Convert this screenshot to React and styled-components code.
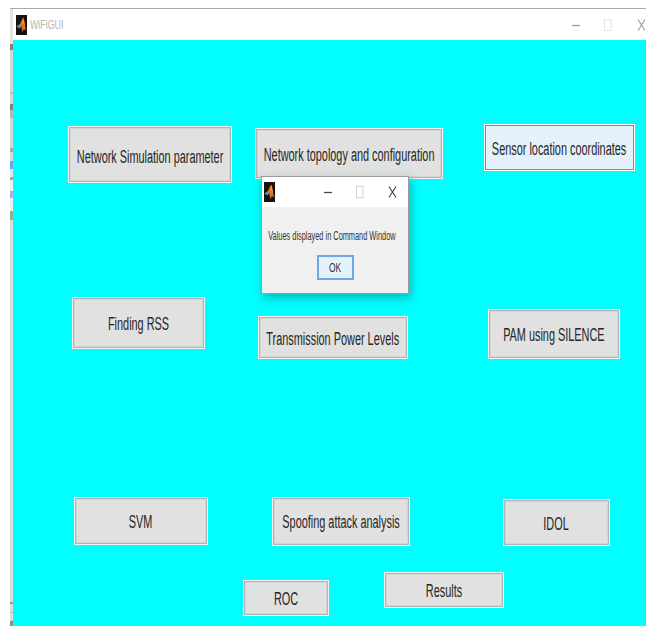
import React from "react";
import styled, { createGlobalStyle, css } from "styled-components";

const Global = createGlobalStyle`
  html, body { margin: 0; padding: 0; background: #fff; }
  body { font-family: "Liberation Sans", Arial, sans-serif; }
`;

const Page = styled.div`
  width: 646px;
  height: 626px;
  overflow: hidden;
  display: flex;
  padding-left: 10px;
  box-sizing: border-box;
  background: #fff;
`;

/* Sliver of the window behind the figure, showing along its left edge */
const BehindStrip = styled.div`
  width: 3px;
  flex: none;
  background: linear-gradient(
    to bottom,
    #fff 0 8px, #a9a9a9 8px 9px, #e2e2e2 9px 44px, #8a7f70 44px 50px, #d6d6d6 50px 92px,
    #bbb 92px 94px, #d6d6d6 94px 104px, #8b8076 104px 110px, #b5b5b5 110px 118px,
    #d8d8d8 118px 148px, #a8a8a8 148px 152px, #d8d8d8 152px 161px, #6aa6ea 161px 169px,
    #e4e4e4 169px 177px, #a4a4a4 177px 180px, #eee 180px 191px, #b5a8f2 191px 198px,
    #eee 198px 211px, #8fb590 211px 220px, #dcdcdc 220px 602px, #9a9a9a 602px 604px,
    #dcdcdc 604px 612px, #bbb 612px 613px, #dcdcdc 613px 621px, #8d8d8d 621px 626px
  );
`;

const FigureWindow = styled.div`
  flex: 1;
  min-width: 0;
  display: flex;
  flex-direction: column;
  padding-top: 8px;
`;

const TitleBar = styled.div`
  height: 31px;
  flex: none;
  display: flex;
  align-items: center;
  background: #fff;
  border-top: 1px solid #a9a9a9;
  padding: 0 0 0 3px;
  box-sizing: content-box;
`;

const AppIcon = styled.svg`
  flex: none;
  display: block;
`;

const TitleText = styled.span`
  margin-left: 3px;
  font-size: 13px;
  color: #b4b4b4;
  display: inline-block;
  transform: scaleX(0.68);
  transform-origin: left center;
`;

const Controls = styled.div`
  margin-left: auto;
  display: flex;
  align-items: center;
`;

const Glyph = styled.svg`
  display: block;
  flex: none;
  margin-left: ${(p) => p.$ml}px;
`;

const Canvas = styled.div`
  position: relative;
  flex: 1;
  background: #00ffff;
  padding-top: 84px;
  display: grid;
  grid-template-rows: 173px 200px 75px 1fr;
`;

const Row = styled.div`
  display: flex;
  align-items: flex-start;
`;

const PushButton = styled.button`
  flex: none;
  width: ${(p) => p.$w}px;
  height: ${(p) => p.$h}px;
  margin-left: ${(p) => p.$ml}px;
  margin-top: ${(p) => p.$mt || 0}px;
  padding: ${(p) => p.$drop ?? 2}px 0 0;
  box-sizing: border-box;
  display: flex;
  align-items: center;
  justify-content: center;
  font-family: "Liberation Sans", Arial, sans-serif;
  font-size: 18px;
  color: #262626;
  background: #e1e1e1;
  border: 1px solid #f2f2f2;
  box-shadow: inset 0 0 0 1px #b4b4b4, inset 0 0 0 2px #d4d4d4;
  ${(p) =>
    p.$focused &&
    css`
      background: #e5f1fb;
      border-color: #fff;
      box-shadow: inset 0 0 0 1px #5c8fd2;
    `}
`;

const Label = styled.span`
  flex: none;
  display: inline-block;
  white-space: nowrap;
  transform: scaleX(0.605);
`;

const Dialog = styled.div`
  position: absolute;
  left: 248px;
  top: 136px;
  width: 148px;
  height: 118px;
  box-sizing: border-box;
  display: flex;
  flex-direction: column;
  background: #f0f0f0;
  border: 1px solid #9c9c9c;
  box-shadow: 2px 4px 9px rgba(0, 80, 80, 0.4);
`;

const DialogTitle = styled.div`
  height: 30px;
  flex: none;
  display: flex;
  align-items: center;
  background: #fff;
  padding-left: 2px;
`;

const DialogBody = styled.div`
  flex: 1;
  display: flex;
  flex-direction: column;
  align-items: center;
  padding-top: 22px;
`;

const Message = styled.span`
  font-size: 12.5px;
  line-height: 14px;
  margin-right: 6px;
  color: #333;
  white-space: nowrap;
  transform: scaleX(0.59);
`;

const OkButton = styled.button`
  width: 37px;
  height: 25px;
  margin-top: 12px;
  padding: 0;
  box-sizing: border-box;
  display: flex;
  align-items: center;
  justify-content: center;
  background: #e5f1fb;
  border: 2px solid #6ea8e4;
  font-family: "Liberation Sans", Arial, sans-serif;
  font-size: 12.5px;
  color: #333;
`;

const OkLabel = styled.span`
  display: inline-block;
  transform: scaleX(0.68);
`;

/* MATLAB membrane mark on a black tile */
const MatlabIcon = ({ w, h }) => (
  <AppIcon width={w} height={h} viewBox="0 0 11 20">
    <rect width="11" height="20" fill="#16120f" />
    <path d="M0.5 11.5 L4 9 L5.5 10.5 L3.5 13.5 Z" fill="#3f9fc4" />
    <path d="M3.8 9.2 L7 2.5 L8.2 6 L10 15.5 L8 14 L6.5 17 L5 11 Z" fill="#e2701f" />
    <path d="M7 2.5 L8.2 6 L9 11 L6.6 7.5 Z" fill="#f2a33a" />
  </AppIcon>
);

const WindowGlyphs = ({ color, boxColor, first, second, right }) => (
  <Controls>
    <Glyph $ml={0} width="10" height="14" viewBox="0 0 10 14">
      <line x1="1" y1="7.5" x2="9" y2="7.5" stroke={color} strokeWidth="1.3" />
    </Glyph>
    <Glyph $ml={first} width="8" height="14" viewBox="0 0 8 14">
      <rect x="0.5" y="1.5" width="6.5" height="11" fill="none" stroke={boxColor} />
    </Glyph>
    <Glyph $ml={second} width="9" height="14" viewBox="0 0 9 14">
      <path d="M1 1.5 L8 12.5 M8 1.5 L1 12.5" fill="none" stroke={color} strokeWidth="1.1" />
    </Glyph>
    <Glyph $ml={right} width="0" height="14" />
  </Controls>
);

const rows = [
  [
    { text: "Network Simulation parameter", ml: 55, w: 164, h: 57, mt: 2, drop: 5 },
    { text: "Network topology and configuration", ml: 23, w: 188, h: 51, mt: 4, drop: 4 },
    { text: "Sensor location coordinates", ml: 41, w: 151, h: 47, focused: true, drop: 4 },
  ],
  [
    { text: "Finding RSS", ml: 59, w: 133, h: 52 },
    { text: "Transmission Power Levels", ml: 53, w: 150, h: 43, mt: 19, drop: 3 },
    { text: "PAM using SILENCE", ml: 80, w: 132, h: 50, mt: 12, drop: 3 },
  ],
  [
    { text: "SVM", ml: 61, w: 134, h: 48 },
    { text: "Spoofing attack analysis", ml: 64, w: 138, h: 49 },
    { text: "IDOL", ml: 93, w: 107, h: 47, mt: 2, drop: 3 },
  ],
  [
    { text: "ROC", ml: 230, w: 86, h: 36, mt: 8 },
    { text: "Results", ml: 55, w: 120, h: 36 },
  ],
];

export default function App() {
  return (
    <>
      <Global />
      <Page>
        <BehindStrip />
        <FigureWindow>
          <TitleBar>
            <MatlabIcon w={11} h={20} />
            <TitleText>WiFiGUI</TitleText>
            <WindowGlyphs color="#9a9a9a" boxColor="#e4e4e4" first={23} second={25} right={0} />
          </TitleBar>
          <Canvas>
            {rows.map((row, i) => (
              <Row key={i}>
                {row.map((b) => (
                  <PushButton key={b.text} $ml={b.ml} $w={b.w} $h={b.h} $mt={b.mt} $drop={b.drop} $focused={b.focused}>
                    <Label>{b.text}</Label>
                  </PushButton>
                ))}
              </Row>
            ))}
            <Dialog>
              <DialogTitle>
                <MatlabIcon w={11} h={20} />
                <WindowGlyphs color="#444" boxColor="#d2d2d2" first={23} second={24} right={11} />
              </DialogTitle>
              <DialogBody>
                <Message>Values displayed in Command Window</Message>
                <OkButton>
                  <OkLabel>OK</OkLabel>
                </OkButton>
              </DialogBody>
            </Dialog>
          </Canvas>
        </FigureWindow>
      </Page>
    </>
  );
}
